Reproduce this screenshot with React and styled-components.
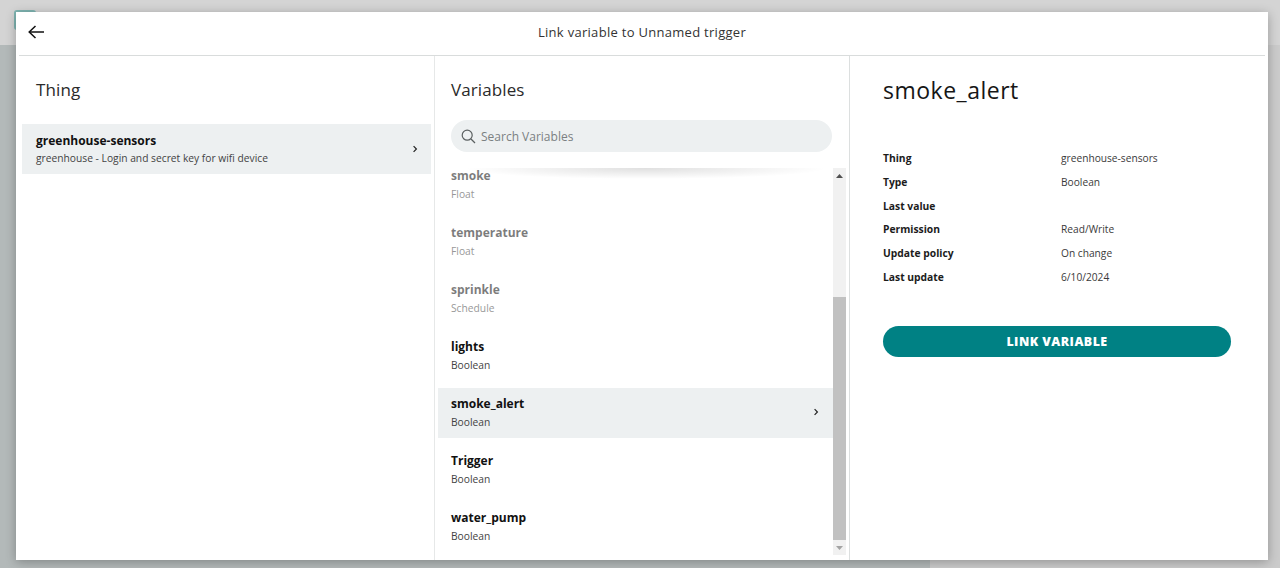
import React from "react";
import styled, { createGlobalStyle } from "styled-components";

const Global = createGlobalStyle`
  html, body { margin: 0; padding: 0; height: 100%; overflow: hidden; }
  body { font-family: "Open Sans", "Noto Sans", sans-serif; color: #111; }
  #root { height: 100%; }
  * { box-sizing: border-box; }
`;

const Page = styled.div`
  position: relative;
  width: 1280px;
  height: 568px;
  overflow: hidden;
  display: flex;
  flex-direction: column;
`;
const Backdrop = styled.div`
  height: 45px;
  background: #d4d4d4;
  position: relative;
`;
const BackdropTab = styled.div`
  position: absolute;
  left: 14px;
  top: 10px;
  width: 22px;
  height: 20px;
  border: 2px solid #7fb5b2;
  border-radius: 3px;
`;
const BackdropBody = styled.div`
  flex: 1;
  display: flex;
`;
const BackdropLeft = styled.div`
  width: 930px;
  background: #b3b9b9;
`;
const BackdropRight = styled.div`
  flex: 1;
  background: #cbcbcb;
`;
const Modal = styled.div`
  position: absolute;
  left: 16px;
  top: 12px;
  width: 1252px;
  height: 548px;
  background: #fff;
  box-shadow: 0 2px 10px rgba(0, 0, 0, 0.28);
  display: flex;
  flex-direction: column;
`;
const Header = styled.header`
  height: 44px;
  margin: 0 3px;
  padding-bottom: 3px;
  border-bottom: 1px solid #d9dcdc;
  display: flex;
  align-items: center;
  justify-content: center;
  position: relative;
  flex: none;
`;
const BackButton = styled.button`
  position: absolute;
  left: 7px;
  top: 10px;
  width: 20px;
  height: 20px;
  padding: 0;
  border: 0;
  background: none;
  display: flex;
  color: #111;
`;
const HeaderTitle = styled.h1`
  margin: 0;
  font-size: 13px;
  font-weight: 400;
  letter-spacing: 0.29px;
  color: #333;
`;
const Columns = styled.div`
  flex: 1;
  display: grid;
  grid-template-columns: 419px 415px 1fr;
  min-height: 0;
`;
const ThingColumn = styled.section`
  border-right: 1px solid #e6e8e8;
  padding: 0 3px 0 6px;
`;
const VariableColumn = styled.section`
  border-right: 1px solid #dcdfdf;
  display: flex;
  flex-direction: column;
  min-height: 0;
  padding-bottom: 5px;
`;
const DetailColumn = styled.section`
  padding: 0 36px 0 33px;
`;
const ColumnTitle = styled.h2`
  margin: 0;
  height: ${(p) => p.$height}px;
  padding: 22px 0 0 ${(p) => p.$inset}px;
  font-size: 17px;
  line-height: 23px;
  font-weight: 400;
  letter-spacing: 0.1px;
  color: #2a2a2a;
`;
const Row = styled.div`
  height: 50px;
  display: flex;
  align-items: center;
  justify-content: space-between;
  padding: 0 ${(p) => p.$end}px ${(p) => p.$lift}px ${(p) => p.$inset}px;
  background: ${(p) => (p.$active ? "#edf0f1" : "transparent")};
  opacity: ${(p) => (p.$faded ? 0.55 : 1)};
  flex: none;
`;
const RowText = styled.div`
  display: flex;
  flex-direction: column;
`;
const RowName = styled.div`
  font-size: 12px;
  line-height: 18px;
  font-weight: 700;
  color: #111;
`;
const RowSub = styled.div`
  font-size: 10.25px;
  line-height: 14px;
  margin-top: ${(p) => p.$gap}px;
  color: #434343;
`;
const Chevron = styled.svg`
  width: 8px;
  height: 8px;
  flex: none;
`;
const SearchBox = styled.div`
  margin: -3px 0 0 16px;
  width: 381px;
  height: 32px;
  border-radius: 16px;
  background: #edf0f1;
  display: flex;
  align-items: center;
  gap: 5px;
  padding-left: 10px;
  flex: none;
  color: #5b6061;
`;
const SearchLabel = styled.span`
  font-size: 12px;
  color: #7b8082;
`;
const ListFrame = styled.div`
  margin-top: 16px;
  flex: 1;
  min-height: 0;
  display: flex;
  position: relative;
  overflow: hidden;
  padding-left: 3px;
  margin-right: 3px;
`;
const ListItems = styled.div`
  flex: 1;
  margin-top: -8px;
  display: flex;
  flex-direction: column;
  gap: 7px;
`;
const TopShade = styled.div`
  position: absolute;
  left: 30px;
  right: 20px;
  top: -10px;
  height: 21px;
  background: radial-gradient(ellipse 50% 50% at 50% 50%, rgba(0, 0, 0, 0.12), rgba(0, 0, 0, 0));
  pointer-events: none;
`;
const Scrollbar = styled.div`
  width: 13px;
  flex: none;
  background: #f1f1f1;
  display: flex;
  flex-direction: column;
`;
const ScrollArrow = styled.div`
  height: 15px;
  display: flex;
  align-items: center;
  justify-content: center;
  flex: none;
`;
const ScrollSpace = styled.div`
  height: ${(p) => p.$h}px;
  flex: none;
`;
const ScrollThumb = styled.div`
  flex: 1;
  background: #c1c1c1;
`;
const DetailTitle = styled.h2`
  margin: 0;
  height: 90.5px;
  padding-top: 16px;
  font-size: 23px;
  line-height: 36px;
  font-weight: 400;
  letter-spacing: 0.5px;
  color: #161616;
`;
const Props = styled.dl`
  margin: 0;
  display: grid;
  grid-template-columns: 178px 1fr;
  grid-auto-rows: 23.7px;
  align-items: center;
`;
const PropName = styled.dt`
  font-size: 10.3px;
  font-weight: 700;
  color: #1c1c1c;
`;
const PropValue = styled.dd`
  margin: 0;
  font-size: 10.2px;
  color: #3a3a3a;
`;
const LinkButton = styled.button`
  margin-top: 37.3px;
  width: 348px;
  height: 31px;
  border: 0;
  border-radius: 16px;
  background: #008184;
  color: #fff;
  font-family: inherit;
  font-size: 12.4px;
  font-weight: 800;
  letter-spacing: 0.45px;
  padding: 0;
`;

const Arrow = () => (
  <Chevron viewBox="0 0 8 8" fill="none" stroke="#222" strokeWidth="1.2">
    <path d="M2.6 1.2 L5.4 4 L2.6 6.8" />
  </Chevron>
);

const variables = [
  { name: "smoke", type: "Float", faded: true },
  { name: "temperature", type: "Float", faded: true },
  { name: "sprinkle", type: "Schedule", faded: true },
  { name: "lights", type: "Boolean" },
  { name: "smoke_alert", type: "Boolean", active: true },
  { name: "Trigger", type: "Boolean" },
  { name: "water_pump", type: "Boolean" },
];

const details = [
  ["Thing", "greenhouse-sensors"],
  ["Type", "Boolean"],
  ["Last value", ""],
  ["Permission", "Read/Write"],
  ["Update policy", "On change"],
  ["Last update", "6/10/2024"],
];

export default function App() {
  return (
    <Page>
      <Global />
      <Backdrop>
        <BackdropTab />
      </Backdrop>
      <BackdropBody>
        <BackdropLeft />
        <BackdropRight />
      </BackdropBody>
      <Modal>
        <Header>
          <BackButton aria-label="Back">
            <svg width="20" height="20" viewBox="0 0 20 20" fill="none" stroke="#111" strokeWidth="1.5">
              <path d="M18 10 H3.5" />
              <path d="M9.5 4 L3.2 10 L9.5 16" />
            </svg>
          </BackButton>
          <HeaderTitle>Link variable to Unnamed trigger</HeaderTitle>
        </Header>
        <Columns>
          <ThingColumn>
            <ColumnTitle $inset={14} $height={68}>Thing</ColumnTitle>
            <Row $active $inset={14} $end={12} $lift={1}>
              <RowText>
                <RowName>greenhouse-sensors</RowName>
                <RowSub $gap={1}>greenhouse - Login and secret key for wifi device</RowSub>
              </RowText>
              <Arrow />
            </Row>
          </ThingColumn>
          <VariableColumn>
            <ColumnTitle $inset={16} $height={67}>Variables</ColumnTitle>
            <SearchBox>
              <svg width="15" height="15" viewBox="0 0 15 15" fill="none" stroke="currentColor" strokeWidth="1.2">
                <circle cx="6.2" cy="6.2" r="5" />
                <path d="M10 10 L14 14" />
              </svg>
              <SearchLabel>Search Variables</SearchLabel>
            </SearchBox>
            <ListFrame>
              <ListItems>
                {variables.map((v) => (
                  <Row key={v.name} $active={v.active} $faded={v.faded} $inset={13} $end={13} $lift={2}>
                    <RowText>
                      <RowName>{v.name}</RowName>
                      <RowSub $gap={2}>{v.type}</RowSub>
                    </RowText>
                    {v.active && <Arrow />}
                  </Row>
                ))}
              </ListItems>
              <TopShade />
              <Scrollbar>
                <ScrollArrow>
                  <svg width="7" height="4" viewBox="0 0 7 4"><path d="M0 4 L3.5 0 L7 4 Z" fill="#505050" /></svg>
                </ScrollArrow>
                <ScrollSpace $h={114} />
                <ScrollThumb />
                <ScrollArrow>
                  <svg width="7" height="4" viewBox="0 0 7 4"><path d="M0 0 L3.5 4 L7 0 Z" fill="#a3a3a3" /></svg>
                </ScrollArrow>
              </Scrollbar>
            </ListFrame>
          </VariableColumn>
          <DetailColumn>
            <DetailTitle>smoke_alert</DetailTitle>
            <Props>
              {details.map(([k, v]) => (
                <React.Fragment key={k}>
                  <PropName>{k}</PropName>
                  <PropValue>{v}</PropValue>
                </React.Fragment>
              ))}
            </Props>
            <LinkButton>LINK VARIABLE</LinkButton>
          </DetailColumn>
        </Columns>
      </Modal>
    </Page>
  );
}
